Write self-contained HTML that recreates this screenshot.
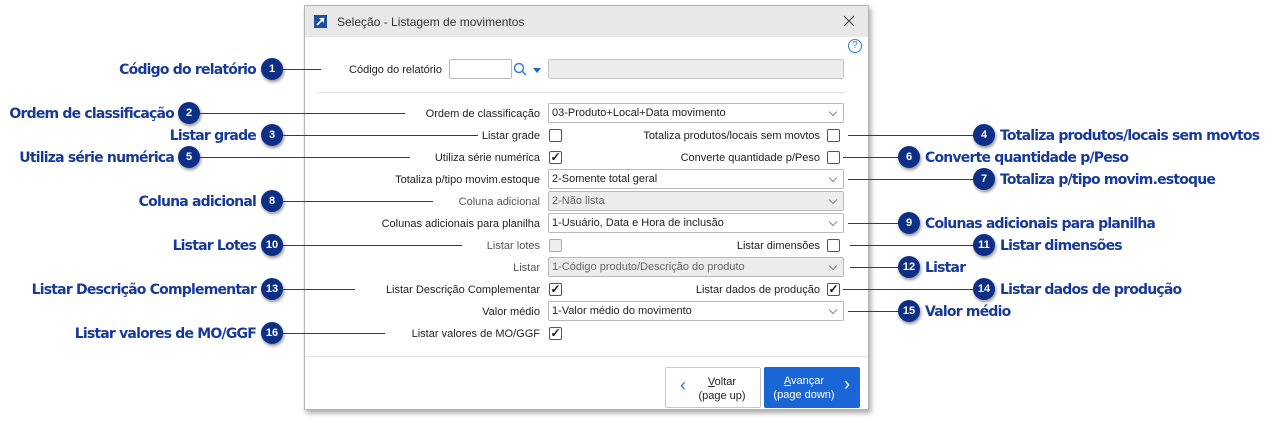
<!DOCTYPE html>
<html><head><meta charset="utf-8"><style>
*{box-sizing:border-box;margin:0;padding:0}
body{width:1274px;height:427px;background:#fff;position:relative;overflow:hidden;font-family:"Liberation Sans",sans-serif}
.dlg{position:absolute;left:304px;top:5px;width:565px;height:405px;background:#fff;border:1px solid #b5b5b5;box-shadow:2px 3px 5px rgba(0,0,0,.35)}
.title{position:absolute;left:0;top:0;width:100%;height:31px;background:#e8e8e8}
.title .t{position:absolute;left:32px;top:9px;font-size:12px;color:#333}
.ico{position:absolute;left:9px;top:9px;width:13px;height:13px;background:#1c4fa0}
.lbl{position:absolute;font-size:11px;color:#222;text-align:right;white-space:nowrap}
.sel{position:absolute;left:243px;width:296px;height:20px;border:1px solid #b9b9b9;border-radius:2px;font-size:11px;color:#222;padding:3px 0 0 3px;background:#fff}
.sel.d{background:#ececec;color:#666}
.sel:after{content:"";position:absolute;right:7px;top:5px;width:5px;height:5px;border-right:1px solid #888;border-bottom:1px solid #888;transform:rotate(45deg)}
.cb{position:absolute;width:13px;height:13px;border:1px solid #555;border-radius:2px;background:#fff;font-size:12px;line-height:11px;text-align:center;color:#111;font-weight:bold}
.cb.d{border-color:#aaa;background:#eee}
.ann{position:absolute;font-size:14px;font-weight:bold;color:#17399a;white-space:nowrap;font-family:"DejaVu Sans","Liberation Sans",sans-serif;letter-spacing:-0.8px;margin-top:2px}
.bd{position:absolute;width:22px;height:22px;border-radius:50%;background:#0d2f85;color:#fff;font-size:11px;font-weight:bold;text-align:center;line-height:22px;box-shadow:1px 2px 3px rgba(0,0,0,.45)}
.ln{position:absolute;height:1px;background:#1a3a8a}
</style></head><body>
<div class="dlg">
 <div class="title"><div class="ico"><svg width="13" height="13" style="display:block"><line x1="3" y1="10" x2="10" y2="3" stroke="#fff" stroke-width="1.6"/><path d="M5 3H10V8Z" fill="#fff"/></svg></div><div class="t">Seleção - Listagem de movimentos</div>
 <svg style="position:absolute;right:13px;top:9px" width="12" height="12"><path d="M1 1L11 11M11 1L1 11" stroke="#444" stroke-width="1.1"/></svg></div>
 <div style="position:absolute;left:543px;top:33px;width:14px;height:14px;border:1.5px solid #2a7ad6;border-radius:50%;font-size:10px;color:#2a7ad6;text-align:center;line-height:11px">?</div>
 <div class="lbl" style="right:426px;top:58px">Código do relatório</div>
 <div style="position:absolute;left:144px;top:53px;width:63px;height:20px;border:1px solid #b9b9b9;border-radius:2px"></div>
 <svg style="position:absolute;left:208px;top:56px" width="14" height="14"><circle cx="6" cy="6" r="4.5" fill="none" stroke="#2a7ad6" stroke-width="1.4"/><line x1="9.5" y1="9.5" x2="13" y2="13" stroke="#2a7ad6" stroke-width="1.5"/></svg>
 <div style="position:absolute;left:228px;top:62px;border-left:4px solid transparent;border-right:4px solid transparent;border-top:5px solid #1c62d0"></div>
 <div style="position:absolute;left:243px;top:53px;width:296px;height:20px;border:1px solid #c6c6c6;border-radius:2px;background:#ececec"></div>
 <div style="position:absolute;left:11px;top:86px;width:529px;height:1px;background:#e3e3e3"></div>

 <div class="lbl" style="right:328px;top:102px">Ordem de classificação</div><div class="sel" style="top:97px">03-Produto+Local+Data movimento</div>
 <div class="lbl" style="right:328px;top:124px">Listar grade</div><div class="cb" style="left:244px;top:123px"></div>
 <div class="lbl" style="right:48px;top:124px">Totaliza produtos/locais sem movtos</div><div class="cb" style="left:522px;top:123px"></div>
 <div class="lbl" style="right:328px;top:146px">Utiliza série numérica</div><div class="cb" style="left:244px;top:145px">✓</div>
 <div class="lbl" style="right:48px;top:146px">Converte quantidade p/Peso</div><div class="cb" style="left:522px;top:145px"></div>
 <div class="lbl" style="right:328px;top:168px">Totaliza p/tipo movim.estoque</div><div class="sel" style="top:163px">2-Somente total geral</div>
 <div class="lbl" style="right:328px;top:190px;color:#555">Coluna adicional</div><div class="sel d" style="top:185px">2-Não lista</div>
 <div class="lbl" style="right:328px;top:212px">Colunas adicionais para planilha</div><div class="sel" style="top:207px">1-Usuário, Data e Hora de inclusão</div>
 <div class="lbl" style="right:328px;top:234px;color:#555">Listar lotes</div><div class="cb d" style="left:244px;top:233px"></div>
 <div class="lbl" style="right:48px;top:234px">Listar dimensões</div><div class="cb" style="left:522px;top:233px"></div>
 <div class="lbl" style="right:328px;top:256px;color:#555">Listar</div><div class="sel d" style="top:251px">1-Código produto/Descrição do produto</div>
 <div class="lbl" style="right:328px;top:278px">Listar Descrição Complementar</div><div class="cb" style="left:244px;top:277px">✓</div>
 <div class="lbl" style="right:48px;top:278px">Listar dados de produção</div><div class="cb" style="left:522px;top:277px">✓</div>
 <div class="lbl" style="right:328px;top:300px">Valor médio</div><div class="sel" style="top:295px">1-Valor médio do movimento</div>
 <div class="lbl" style="right:328px;top:322px">Listar valores de MO/GGF</div><div class="cb" style="left:244px;top:321px">✓</div>

 <div style="position:absolute;left:0;top:350px;width:100%;height:1px;background:#e3e3e3"></div>
 <div style="position:absolute;left:360px;top:361px;width:96px;height:41px;border:1px solid #c6c6c6;border-radius:2px;font-size:11px;color:#222;text-align:center;padding:7px 0 0 18px;line-height:14px"><u>V</u>oltar<br>(page up)<span style="position:absolute;left:14px;top:10px;font-size:18px;color:#2a7ad6;font-weight:normal">‹</span></div>
 <div style="position:absolute;left:459px;top:361px;width:96px;height:41px;background:#1a66d6;border-radius:2px;font-size:11px;color:#fff;text-align:center;padding:7px 16px 0 0;line-height:14px"><u>A</u>vançar<br>(page down)<span style="position:absolute;right:10px;top:10px;font-size:18px">›</span></div>
</div>

<div class="ann" style="right:1018px;top:60px">Código do relatório</div><div class="bd" style="left:261px;top:58px">1</div><div class="ln" style="left:283px;top:69px;width:38px"></div>
<div class="ann" style="right:1100px;top:104px">Ordem de classificação</div><div class="bd" style="left:178px;top:102px">2</div><div class="ln" style="left:200px;top:113px;width:205px"></div>
<div class="ann" style="right:1018px;top:126px">Listar grade</div><div class="bd" style="left:261px;top:124px">3</div><div class="ln" style="left:283px;top:135px;width:195px"></div>
<div class="ann" style="right:1100px;top:148px">Utiliza série numérica</div><div class="bd" style="left:178px;top:146px">5</div><div class="ln" style="left:200px;top:157px;width:210px"></div>
<div class="ann" style="right:1018px;top:192px">Coluna adicional</div><div class="bd" style="left:261px;top:190px">8</div><div class="ln" style="left:283px;top:201px;width:150px"></div>
<div class="ann" style="right:1018px;top:236px">Listar Lotes</div><div class="bd" style="left:261px;top:234px">10</div><div class="ln" style="left:283px;top:245px;width:179px"></div>
<div class="ann" style="right:1018px;top:280px">Listar Descrição Complementar</div><div class="bd" style="left:261px;top:278px">13</div><div class="ln" style="left:283px;top:289px;width:72px"></div>
<div class="ann" style="right:1018px;top:324px">Listar valores de MO/GGF</div><div class="bd" style="left:261px;top:322px">16</div><div class="ln" style="left:283px;top:333px;width:102px"></div>

<div class="ln" style="left:848px;top:135px;width:126px"></div><div class="bd" style="left:973px;top:124px">4</div><div class="ann" style="left:1000px;top:126px">Totaliza produtos/locais sem movtos</div>
<div class="ln" style="left:843px;top:157px;width:56px"></div><div class="bd" style="left:898px;top:146px">6</div><div class="ann" style="left:925px;top:148px">Converte quantidade p/Peso</div>
<div class="ln" style="left:848px;top:179px;width:126px"></div><div class="bd" style="left:973px;top:168px">7</div><div class="ann" style="left:1000px;top:170px">Totaliza p/tipo movim.estoque</div>
<div class="ln" style="left:848px;top:223px;width:51px"></div><div class="bd" style="left:898px;top:212px">9</div><div class="ann" style="left:925px;top:214px">Colunas adicionais para planilha</div>
<div class="ln" style="left:850px;top:245px;width:124px"></div><div class="bd" style="left:973px;top:234px">11</div><div class="ann" style="left:1000px;top:236px">Listar dimensões</div>
<div class="ln" style="left:850px;top:267px;width:49px"></div><div class="bd" style="left:898px;top:256px">12</div><div class="ann" style="left:925px;top:258px">Listar</div>
<div class="ln" style="left:843px;top:289px;width:131px"></div><div class="bd" style="left:973px;top:278px">14</div><div class="ann" style="left:1000px;top:280px">Listar dados de produção</div>
<div class="ln" style="left:848px;top:311px;width:51px"></div><div class="bd" style="left:898px;top:300px">15</div><div class="ann" style="left:925px;top:302px">Valor médio</div>
</body></html>
